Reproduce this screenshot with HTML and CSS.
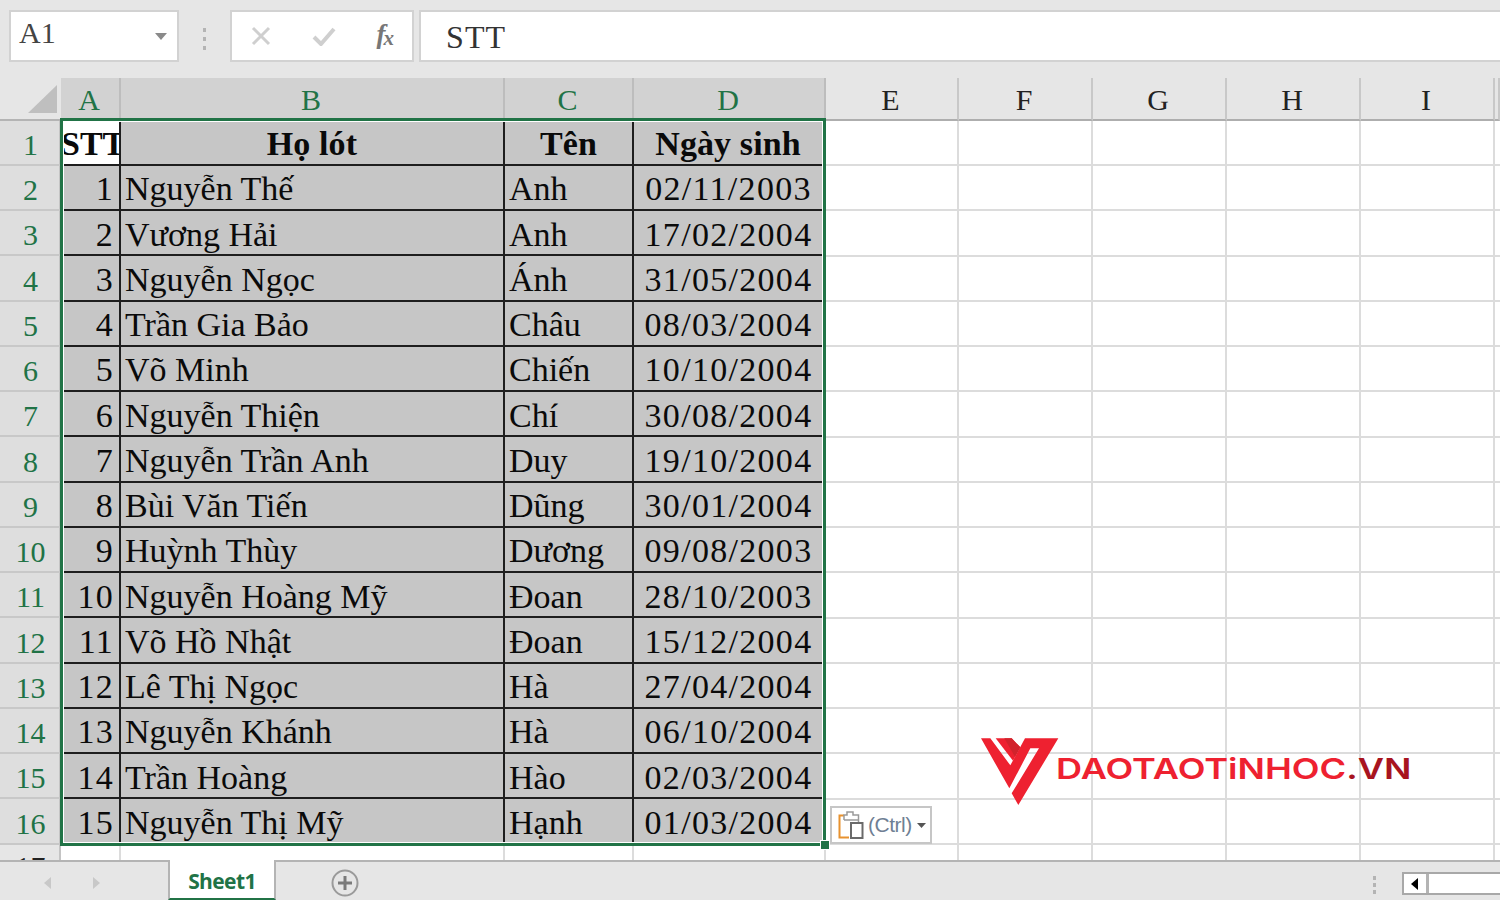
FILE: index.html
```html
<!DOCTYPE html>
<html lang="vi">
<head>
<meta charset="utf-8">
<title>Sheet1</title>
<link rel="stylesheet" href="styles.css">
</head>
<body>
<div class="app">
  <header class="formula-bar">
    <div class="name-box"><span>A1</span><svg class="caret" width="12" height="7" viewBox="0 0 12 7"><path d="M0 0H12L6 7Z"/></svg></div>
    <div class="grip"><i></i><i></i><i></i></div>
    <div class="fx-box">
      <svg width="20" height="20" viewBox="0 0 20 20"><path d="M2 2L18 18M18 2L2 18" stroke="#cfcfcf" stroke-width="3" fill="none"/></svg>
      <svg width="24" height="20" viewBox="0 0 24 20"><path d="M2 11L9 18L22 3" stroke="#cfcfcf" stroke-width="4" fill="none"/></svg>
      <span class="fx">f<sub>x</sub></span>
    </div>
    <div class="formula-input">STT</div>
  </header>

  <main class="sheet">
    <div class="grid">
      <div class="corner"><svg width="30" height="30" viewBox="0 0 30 30"><path d="M30 1V29H1Z"/></svg></div>
      <div class="ch sel">A</div><div class="ch sel">B</div><div class="ch sel">C</div><div class="ch sel">D</div>
      <div class="ch">E</div><div class="ch">F</div><div class="ch">G</div><div class="ch">H</div><div class="ch">I</div><div class="ch"></div>

      <div class="blank-area"></div>

      <div class="rh">1</div><div class="c head first">STT</div><div class="c head ctr">Họ lót</div><div class="c head ctr">Tên</div><div class="c head ctr hd">Ngày sinh</div>
      <div class="rh">2</div><div class="c num">1</div><div class="c nm">Nguyễn Thế</div><div class="c nm">Anh</div><div class="c dt">02/11/2003</div>
      <div class="rh">3</div><div class="c num">2</div><div class="c nm">Vương Hải</div><div class="c nm">Anh</div><div class="c dt">17/02/2004</div>
      <div class="rh">4</div><div class="c num">3</div><div class="c nm">Nguyễn Ngọc</div><div class="c nm">Ánh</div><div class="c dt">31/05/2004</div>
      <div class="rh">5</div><div class="c num">4</div><div class="c nm">Trần Gia Bảo</div><div class="c nm">Châu</div><div class="c dt">08/03/2004</div>
      <div class="rh">6</div><div class="c num">5</div><div class="c nm">Võ Minh</div><div class="c nm">Chiến</div><div class="c dt">10/10/2004</div>
      <div class="rh">7</div><div class="c num">6</div><div class="c nm">Nguyễn Thiện</div><div class="c nm">Chí</div><div class="c dt">30/08/2004</div>
      <div class="rh">8</div><div class="c num">7</div><div class="c nm">Nguyễn Trần Anh</div><div class="c nm">Duy</div><div class="c dt">19/10/2004</div>
      <div class="rh">9</div><div class="c num">8</div><div class="c nm">Bùi Văn Tiến</div><div class="c nm">Dũng</div><div class="c dt">30/01/2004</div>
      <div class="rh">10</div><div class="c num">9</div><div class="c nm">Huỳnh Thùy</div><div class="c nm">Dương</div><div class="c dt">09/08/2003</div>
      <div class="rh">11</div><div class="c num">10</div><div class="c nm">Nguyễn Hoàng Mỹ</div><div class="c nm">Đoan</div><div class="c dt">28/10/2003</div>
      <div class="rh">12</div><div class="c num">11</div><div class="c nm">Võ Hồ Nhật</div><div class="c nm">Đoan</div><div class="c dt">15/12/2004</div>
      <div class="rh">13</div><div class="c num">12</div><div class="c nm">Lê Thị Ngọc</div><div class="c nm">Hà</div><div class="c dt">27/04/2004</div>
      <div class="rh">14</div><div class="c num">13</div><div class="c nm">Nguyễn Khánh</div><div class="c nm">Hà</div><div class="c dt">06/10/2004</div>
      <div class="rh">15</div><div class="c num">14</div><div class="c nm">Trần Hoàng</div><div class="c nm">Hào</div><div class="c dt">02/03/2004</div>
      <div class="rh">16</div><div class="c num">15</div><div class="c nm last">Nguyễn Thị Mỹ</div><div class="c nm last">Hạnh</div><div class="c dt last">01/03/2004</div>
      <div class="rh plain">17</div><div class="e"></div><div class="e"></div><div class="e"></div><div class="e"></div>
    </div>

    <div class="selection"><span class="handle"></span></div>

    <div class="paste">
      <svg width="26" height="28" viewBox="0 0 26 28">
        <path d="M11 26.500H1.500V4.500H6" fill="none" stroke="#e8922f" stroke-width="2"/>
        <path d="M6 9V4H9V1H15V4H20.500V12" fill="#fff" stroke="#9a9a9a" stroke-width="1.500"/>
        <path d="M6 9H20" stroke="#9a9a9a" stroke-width="1.500"/>
        <rect x="13" y="12" width="11.500" height="15" fill="#fff" stroke="#6a6a6a" stroke-width="2"/>
      </svg>
      <span>(Ctrl)</span>
      <svg width="9" height="5" viewBox="0 0 9 5"><path d="M0 0H9L4.500 5Z" fill="#555"/></svg>
    </div>

    <div class="logo">
      <svg width="90" height="80" viewBox="0 0 270 240">
        <path d="M18 25H46L106 106L150 25H250L130 225L110 190L192 55H166L103 175Z" fill="#ee2130"/>
        <path d="M62 25H110L136 52L114 92Z" fill="#ee2130"/>
        <path d="M88 25H110L136 52L120 80Z" fill="#d1232c"/>
      </svg>
      <span class="logo-text">DAOTAOTiNHOC<span class="vn">.VN</span></span>
    </div>
  </main>

  <footer class="tabs">
    <div class="nav">
      <svg width="10" height="14" viewBox="0 0 10 14"><path d="M8 1V13L1 7Z"/></svg>
      <svg width="10" height="14" viewBox="0 0 10 14"><path d="M2 1V13L9 7Z"/></svg>
    </div>
    <div class="tab">Sheet1</div>
    <svg class="add" width="28" height="28" viewBox="0 0 28 28"><circle cx="14" cy="14" r="12.500" fill="none" stroke="#9a9a9a" stroke-width="2"/><path d="M14 7V21M7 14H21" stroke="#7a7a7a" stroke-width="3"/></svg>
    <div class="grip bottom"><i></i><i></i><i></i></div>
    <div class="scroll"><span class="scroll-btn"><svg width="8" height="12" viewBox="0 0 8 12"><path d="M7 0V12L0 6Z"/></svg></span></div>
  </footer>
</div>
</body>
</html>
```
FILE: styles.css
```css
* { box-sizing: border-box; }
html, body { margin: 0; height: 100%; overflow: hidden; background: #fff; }
.app { width: 1500px; height: 900px; display: flex; flex-direction: column; font-family: "Liberation Serif", "Noto Sans CJK SC", serif; color: #000; }

/* formula bar */
.formula-bar { height: 78px; flex: none; background: #e6e6e6; display: flex; align-items: flex-start; padding: 10px 0 0 9px; }
.name-box { width: 170px; height: 52px; background: #fff; border: 2px solid #d2d2d2; display: flex; align-items: center; justify-content: space-between; padding: 0 10px 6px 8px; font-size: 30px; color: #444; }
.caret { fill: #8a8a8a; margin-top: 6px; }
.grip { display: flex; flex-direction: column; gap: 5px; width: 51px; align-items: center; padding-top: 18px; }
.grip i { width: 3px; height: 4px; background: #b4b4b4; display: block; }
.fx-box { width: 184px; height: 52px; background: #fff; border: 2px solid #d2d2d2; display: flex; align-items: center; padding: 0 20px 0 19px; justify-content: space-between; }
.fx { font-style: italic; font-weight: bold; font-size: 27px; color: #777; line-height: 1; margin-top: -4px; letter-spacing: -2px; }
.fx sub { font-size: 21px; vertical-align: -2px; line-height: 0; }
.formula-input { margin-left: 5px; flex: 1; height: 52px; background: #fff; border: 2px solid #d2d2d2; border-right: 0; padding: 0 0 0 25px; font-size: 32px; letter-spacing: 1.1px; line-height: 50px; color: #333; }

/* sheet */
.sheet { position: relative; flex: 1; min-height: 0; overflow: hidden; background: #fff; }
.grid { display: grid; grid-template-columns: 61px 60px 384px 129px 192px 133px 134px 134px 134px 134px 1fr; grid-template-rows: 42.5px repeat(17, 45.25px); }
.corner { background: #e6e6e6; border-bottom: 2px solid #b4b4b4; display: flex; align-items: flex-end; justify-content: flex-end; padding: 0 4px 5px 0; }
.corner svg { fill: #bfbfbf; display: block; }
.ch { background: #e6e6e6; border-right: 2px solid #c8c8c8; border-bottom: 2px solid #aeaeae; display: flex; align-items: flex-end; justify-content: center; font-size: 30px; line-height: 38px; padding-right: 2px; color: #222; }
.ch.sel { background: #d2d2d2; border-right-color: #bdbdbd; color: #217346; }
.rh { background: #dedede; border-right: 2px solid #c4c4c4; border-bottom: 2px solid #c8c8c8; display: flex; align-items: flex-end; justify-content: center; font-size: 30px; line-height: 38px; color: #217346; padding-left: 2px; }
.rh.plain { background: #e6e6e6; color: #222; line-height: 42px; }
.c { background: #c6c6c6; border-right: 2px solid #1e1e1e; border-bottom: 2px solid #1e1e1e; font-size: 34px; line-height: 43px; padding-top: 1.5px; white-space: nowrap; overflow: hidden; color: #0a0a0a; }
.head { font-weight: bold; letter-spacing: 0.1px; }
.head.first { background: #fff; padding-left: 0; letter-spacing: 0; }
.ctr { text-align: center; }
.hd { border-right: 0; padding-right: 4px; }
.num { text-align: right; padding-right: 5px; letter-spacing: 1.2px; }
.nm { padding-left: 4px; letter-spacing: 0; }
.dt { text-align: center; letter-spacing: 1.3px; border-right: 0; padding-right: 3px; }
.last { border-bottom: 0; }
.e { background: #fff; border-right: 2px solid #dcdcdc; }
.blank-area { grid-column: 6 / -1; grid-row: 2 / -1; background-image:
  repeating-linear-gradient(to bottom, transparent 0, transparent 43.25px, #dcdcdc 43.25px, #dcdcdc 45.25px),
  linear-gradient(to right, transparent 131px, #dcdcdc 131px, #dcdcdc 133px, transparent 133px, transparent 265px, #dcdcdc 265px, #dcdcdc 267px, transparent 267px, transparent 399px, #dcdcdc 399px, #dcdcdc 401px, transparent 401px, transparent 533px, #dcdcdc 533px, #dcdcdc 535px, transparent 535px, transparent 667px, #dcdcdc 667px, #dcdcdc 669px, transparent 669px); }

/* overlays */
.selection { position: absolute; left: 60px; top: 40px; width: 766px; height: 728px; border: 3px solid #217346; box-shadow: inset 0 0 0 1px #fff; pointer-events: none; }
.handle { position: absolute; right: -7px; bottom: -7px; width: 10px; height: 10px; background: #217346; border: 1px solid #fff; }
.paste { position: absolute; left: 830px; top: 728px; width: 102px; height: 38px; background: #fff; border: 2px solid #c6c6c6; display: flex; align-items: center; padding-left: 6px; gap: 4px; font-family: "Liberation Sans", sans-serif; font-size: 21px; letter-spacing: -0.5px; color: #6f7f94; }
.paste svg:last-child { margin-left: 1px; }
.logo { position: absolute; left: 975px; top: 652px; display: flex; align-items: flex-start; }
.logo-text { position: absolute; left: 81px; top: 22px; font-family: Inter, "DejaVu Sans", sans-serif; font-weight: 600; font-size: 29px; line-height: 34px; white-space: nowrap; color: #ee2130; transform-origin: left center; transform: scaleX(1.245); }
.vn { color: #a8141f; }

/* tabs */
.tabs { height: 40px; flex: none; background: #e6e6e6; border-top: 2px solid #b4b4b4; display: flex; align-items: center; position: relative; }
.nav { width: 168px; display: flex; gap: 38px; padding-left: 43px; margin-top: 3px; }
.nav svg { fill: #c8c8c8; }
.tab { width: 108px; height: 40px; margin-top: -2px; background: #fff; border-left: 2px solid #b4b4b4; border-right: 2px solid #b4b4b4; border-bottom: 2px solid #217346; font-family: "Open Sans", "Liberation Sans", sans-serif; font-weight: bold; font-size: 21px; letter-spacing: -0.6px; line-height: 42px; text-align: center; color: #217346; }
.add { margin-left: 55px; margin-top: 3px; }
.grip.bottom { position: absolute; left: 1349px; top: 0; padding-top: 14px; gap: 3px; }
.scroll { position: absolute; left: 1402px; top: 10px; right: 0; height: 23px; background: #fff; border: 2px solid #a8a8a8; border-right: 0; }
.scroll-btn { display: flex; width: 25px; height: 100%; border-right: 3px solid #b4b4b4; align-items: center; justify-content: center; }
```
